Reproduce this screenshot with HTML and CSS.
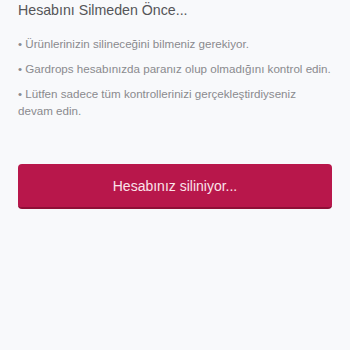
FILE: index.html
```html
<!DOCTYPE html>
<html lang="tr">
<head>
<meta charset="utf-8">
<link rel="stylesheet" href="styles.css">
</head>
<body>
<div class="page">
  <h1 class="title">Hesabını Silmeden Önce...</h1>
  <ul class="notes">
    <li>• Ürünlerinizin silineceğini bilmeniz gerekiyor.</li>
    <li>• Gardrops hesabınızda paranız olup olmadığını kontrol edin.</li>
    <li>• Lütfen sadece tüm kontrollerinizi gerçekleştirdiyseniz devam edin.</li>
  </ul>
  <button class="delete-btn">Hesabınız siliniyor...</button>
</div>
</body>
</html>
```
FILE: styles.css
```css
html, body {
  margin: 0;
  padding: 0;
  background: #f8f9fb;
}
body {
  font-family: "Liberation Sans", Arial, sans-serif;
  width: 350px;
  height: 350px;
  overflow: hidden;
}
.page {
  padding: 0 18px;
  display: flex;
  flex-direction: column;
}
.title {
  margin: 0;
  font-size: 14.2px;
  font-weight: normal;
  color: #555558;
  line-height: 20px;
}
.notes {
  list-style: none;
  margin: 15px 0 0;
  padding: 0;
  display: flex;
  flex-direction: column;
  gap: 8px;
}
.notes li {
  font-size: 11.6px;
  line-height: 17px;
  color: #8a8a8e;
}
.delete-btn {
  margin-top: 45px;
  height: 45px;
  border: none;
  border-bottom: 2px solid #8f0f37;
  border-radius: 4px;
  background: #b8174b;
  color: #fbe3ea;
  font-family: "Liberation Sans", Arial, sans-serif;
  font-size: 14px;
  padding: 0;
}
```
